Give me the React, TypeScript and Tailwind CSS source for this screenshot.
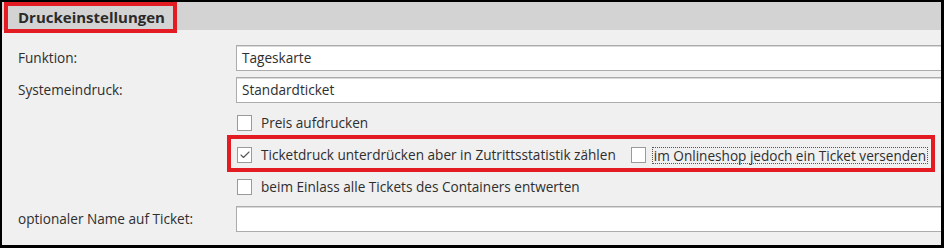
import { Check } from "lucide-react";

const font = "font-['Open_Sans','Liberation_Sans',sans-serif]";

function Field({ value }: { value?: string }) {
  return (
    <div className="h-[26px] flex items-center bg-white border border-[#acacac] border-r-0 shadow-[inset_0_1px_0_#d9d9d9] pl-[5px]">
      {value}
    </div>
  );
}

function Box({ checked }: { checked?: boolean }) {
  return (
    <span className="w-[15px] h-[16px] shrink-0 bg-white border border-[#9a9a9a] flex items-center justify-center">
      {checked && <Check size={12} strokeWidth={2.2} className="text-[#555]" />}
    </span>
  );
}

function CheckRow({ label, checked }: { label: string; checked?: boolean }) {
  return (
    <div className="h-[32px] flex items-center gap-[9px] pl-[1px]">
      <Box checked={checked} />
      <span>{label}</span>
    </div>
  );
}

export default function App() {
  return (
    <div className={`w-[944px] h-[248px] bg-black pt-[2px] pl-[2px] pr-[3px] pb-[3px] ${font}`}>
      <div className="h-full bg-[#f0f0f0] flex flex-col text-[13.6px] text-[#2e2e2e]">
        <header className="h-[28px] shrink-0 bg-[#d3d3d3]">
          <div className="relative z-10 ml-[2px] w-[173px] h-[31px] border-[4px] border-[#e31b23] pl-[10px] flex items-center">
            <span className="font-bold text-[15px] text-[#2a2a2a]">Druckeinstellungen</span>
          </div>
        </header>

        <div className="grid grid-cols-[234px_1fr] pt-[15px]">
          <div className="h-[26px] flex items-center pl-[16px]">Funktion:</div>
          <Field value="Tageskarte" />

          <div className="h-[26px] mt-[6px] flex items-center pl-[16px]">Systemeindruck:</div>
          <div className="mt-[6px]">
            <Field value="Standardticket" />
          </div>

          <div />
          <div className="pt-[4px]">
            <CheckRow label="Preis aufdrucken" />
            <div className="relative h-[32px] flex items-center pl-[1px]">
              <div className="absolute -left-[9px] -top-[4px] w-[708px] h-[37px] border-[4px] border-[#e31b23] pointer-events-none" />
              <Box checked />
              <span className="ml-[9px]">Ticketdruck unterdrücken aber in Zutrittsstatistik zählen</span>
              <span className="ml-[15px]">
                <Box />
              </span>
              <span className="ml-[6px] px-[1px] border border-dotted border-[#555] leading-[15px]">
                im Onlineshop jedoch ein Ticket versenden
              </span>
            </div>
            <CheckRow label="beim Einlass alle Tickets des Containers entwerten" />
          </div>

          <div className="h-[26px] mt-[3px] flex items-center pl-[16px]">optionaler Name auf Ticket:</div>
          <div className="mt-[3px]">
            <Field />
          </div>
        </div>
      </div>
    </div>
  );
}
